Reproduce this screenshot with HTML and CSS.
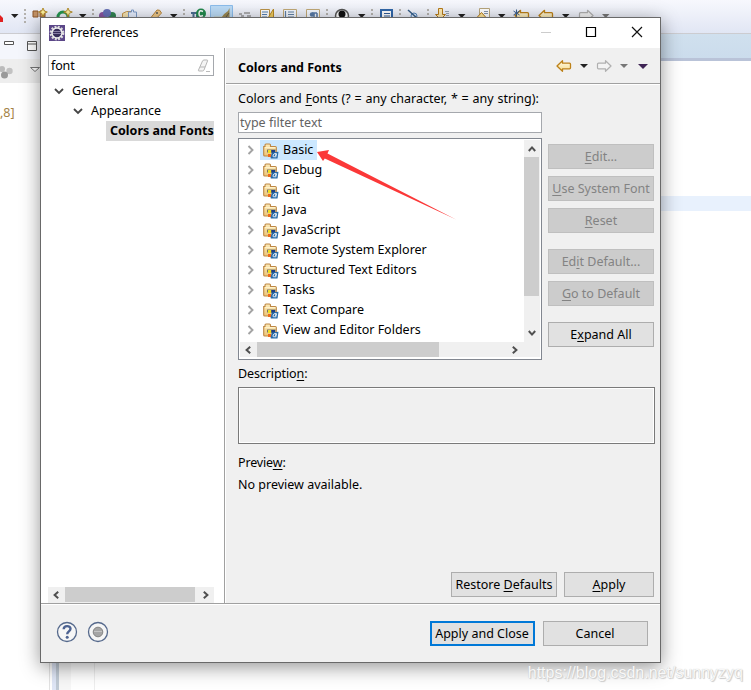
FILE: index.html
```
<!DOCTYPE html>
<html lang="en">
<head>
<meta charset="utf-8">
<title>Preferences</title>
<link rel="stylesheet" href="styles.css">
</head>
<body>
<svg class="defs" width="0" height="0">
  <defs>
    <linearGradient id="gold" x2="0" y2="1"><stop stop-color="#fffbe8"/><stop offset="1" stop-color="#f7dc8c"/></linearGradient>
    <linearGradient id="tan" x2="0" y2="1"><stop stop-color="#fdebb8"/><stop offset="1" stop-color="#edc578"/></linearGradient>
    <symbol id="folder" viewBox="0 0 16 16">
      <path d="M.7 3.500V12a1 1 0 0 0 1 1h10.600a1 1 0 0 0 1-1V4.500a1 1 0 0 0-1-1H7.500V2a1 1 0 0 0-1-1H3a1 1 0 0 0-1 1v1.500z" fill="url(#tan)" stroke="#bd8745" stroke-width="1.100"/>
      <path d="M2 4.700h10.500" stroke="#fff6d4"/>
      <path d="M4 6.500h8.500v3H4z" fill="#77736a"/>
      <path d="M5 7h3v3H5z" fill="#f0e020"/>
      <path d="M8.500 7h3.500v3H8.500z" fill="#1d3d80"/>
      <path d="M5 11h3v3H5z" fill="#ee6a1b"/>
      <path d="M7.500 15l1.300-5.500 6.700-.8-1 6.800H8z" fill="#286ba8"/>
      <path d="M13.300 10.700c-2-.6-3.200.7-3.200 2.200 0 1.600 1.700 1.200 2.500-.3l.7-1.900-.6 3.600" fill="none" stroke="#fff" stroke-width=".9"/>
    </symbol>
    <symbol id="right" viewBox="0 0 8 10"><path d="M1.500 1l4 4-4 4" fill="none" stroke="#a3a3a3" stroke-width="1.900"/></symbol>
    <symbol id="down" viewBox="0 0 10 8"><path d="M1 2l4 4 4-4" fill="none" stroke="#454545" stroke-width="1.800"/></symbol>
    <symbol id="sleft" viewBox="0 0 8 8"><path d="M6.200.8L2.600 4l3.600 3.200" fill="none" stroke="#505050" stroke-width="2"/></symbol>
    <symbol id="sright" viewBox="0 0 8 8"><path d="M1.800.8L5.400 4 1.800 7.200" fill="none" stroke="#505050" stroke-width="2"/></symbol>
    <symbol id="sup" viewBox="0 0 8 8"><path d="M.8 6L4 2.400 7.200 6" fill="none" stroke="#505050" stroke-width="2"/></symbol>
    <symbol id="sdown" viewBox="0 0 8 8"><path d="M.8 2L4 5.600 7.200 2" fill="none" stroke="#505050" stroke-width="2"/></symbol>
    <symbol id="back" viewBox="0 0 16 12"><path d="M1 6l5.500-5.300v2.500h7a1 1 0 0 1 1 1v3.600a1 1 0 0 1-1 1h-7v2.500z" fill="url(#gold)" stroke="#bd8118" stroke-width="1.300" stroke-linejoin="round"/></symbol>
    <symbol id="fwd" viewBox="0 0 16 12"><path d="M15 6L9.500.7v2.500h-7a1 1 0 0 0-1 1v3.600a1 1 0 0 0 1 1h7v2.500z" fill="#f3f3f3" stroke="#b0b0b0" stroke-width="1.200" stroke-linejoin="round"/></symbol>
    <symbol id="caret" viewBox="0 0 8 4"><path d="M0 0h8L4 4z" fill="currentColor"/></symbol>
  </defs>
</svg>
<div class="desktop">
  <div class="toolbar">
    <svg width="751" height="33" viewBox="0 0 751 33">
      <path d="M0 15l3 3v4H0z" fill="#e02020"/>
      <g fill="#222"><path d="M11 14h7.500l-3.800 4zM79 14h7.500l-3.800 4zM170 14h7.500l-3.800 4zM358 14h7.500l-3.800 4zM458 14h7.500l-3.800 4zM498 14h7.500l-3.800 4zM562 14h7.500l-3.800 4z"/><path d="M602 14h7.500l-3.800 4z" fill="#777"/></g>
      <g stroke="#a39f96" stroke-width="1.500" stroke-dasharray="2 2"><path d="M25 9v16M93 9v16M184 9v16M327 9v16M372 9v16M400 9v16M428 9v16"/></g>
      <path d="M33 11h5v6h-5zM40 11h5v6h-5z" fill="#c39265" stroke="#8b5429"/>
      <circle cx="63" cy="17" r="5" fill="none" stroke="#259750" stroke-width="3"/>
      <path d="M43 8l1.300 3 3 1-3 1.300L43 17l-1.300-3.700-3-1.300 3-1zM68 8l1.300 3 3 1-3 1.300L68 17l-1.300-3.700-3-1.300 3-1z" fill="#fff3a0" stroke="#b08720" stroke-width=".9"/>
      <circle cx="103" cy="16" r="4" fill="#8954a1"/><circle cx="112" cy="16" r="4" fill="#318452"/><circle cx="107" cy="13" r="4" fill="#6670b8"/>
      <path d="M122.500 18v-4.500l4-2h5v6" fill="#f8e4b0" stroke="#c3954c"/><path d="M128.500 18v-6h3v-2h2v2h3v6" fill="#e6efff" stroke="#7c9bc8"/>
      <path d="M149 20l8-10q3-1 4.500 3L155 20z" fill="#f0c987" stroke="#b8863f"/><circle cx="157" cy="13" r="1" fill="#555"/>
      <path d="M191 13h10M193.500 13v6M197 15v4" stroke="#4c6e92" stroke-width="2"/><circle cx="201" cy="13.500" r="5" fill="#238a4e"/><path d="M203 11.500q-4-2-4 2t4 2" fill="none" stroke="#fff" stroke-width="1.500"/>
      <path d="M210.500 5.500h22v20h-22z" fill="#bcdcf7" stroke="#8cbdec"/><path d="M221 18q2-4 7-7l1.500-3v10z" fill="#9b8954"/><path d="M226 17l3-4" stroke="#5e5745"/><path d="M214 17.300h9" stroke="#e6bb56"/>
      <path d="M239 14h3m2-1h6m-9 3h3m3 0h4" stroke="#999" stroke-width="1.500"/>
      <path d="M260.500 9.500h9v9h-9z" fill="#fff" stroke="#bc9449"/><path d="M262 12h6M262 14.500h5M262 17h5" stroke="#5482b8"/><path d="M268 18l5.500-9v9" fill="#f0cc60" stroke="#b88923"/>
      <path d="M283.500 9.500h13v10h-13zM306.500 9.500h13v10h-13z" fill="#f5f9ff" stroke="#c3aa78"/><path d="M288 12h6m-6 2.500h6M288 17h6M285.500 11v7" stroke="#6082a8" stroke-width="1.200"/><path d="M317 13h-5M314 13v5m3-5v5" fill="none" stroke="#587ba8" stroke-width="1.500"/><circle cx="312" cy="14.500" r="2.200" fill="#587ba8"/>
      <circle cx="342" cy="16" r="6.500" fill="#fff" stroke="#555" stroke-width="1.500"/><circle cx="342" cy="14" r="3.500" fill="#111"/>
      <path d="M381 10h11v10h-11z" fill="#fff" stroke="#3268ab" stroke-width="2"/><path d="M384 13.500h6m-6 2.500h6" stroke="#315c99"/>
      <circle cx="414" cy="16" r="3" fill="#d9e9ff" stroke="#5585ba"/><path d="M408 10l10 9" stroke="#375e87" stroke-width="1.500"/>
      <path d="M438.500 8.500h4v6h3l-5 5-5-5h3z" fill="#ffeab0" stroke="#b77b19"/><path d="M445 11.500h4m-3 2h3m-3 2h3" stroke="#98a4b5"/>
      <path d="M479.500 8.500h10v9h-10z" fill="#fff" stroke="#b9a77d"/><path d="M484 11.500h4m-4 2h4" stroke="#8697b0"/><path d="M477 17.500l4.500-5 4.500 5z" fill="#ffe69c" stroke="#b77b19"/>
      <use href="#back" x="514" y="9.500" width="16" height="12"/><path d="M516.500 9.500v7m-3-5.500l6 4m0-4l-6 4" stroke="#385e91"/>
      <use href="#back" x="538" y="9.500" width="16" height="12"/><use href="#fwd" x="578" y="9.500" width="16" height="12"/>
    </svg>
  </div>
  <div class="workbench">
    <div class="side">
      <div class="side-tabs"><svg width="40" height="25"><path d="M4.500 7.500h9v3h-9z" fill="#fff" stroke="#555"/><path d="M27.500 7.500h9v9h-9zM27.500 10h9" fill="#fff" stroke="#555"/></svg></div>
      <div class="side-tools"><svg width="40" height="24"><circle cx="2" cy="10" r="3" fill="#bbb"/><circle cx="9.500" cy="12" r="3.200" fill="#c2c2c2"/><circle cx="4.500" cy="16" r="3.500" fill="#999"/><path d="M30.500 8.500h9l-4.500 4z" fill="#fff" stroke="#777"/></svg></div>
      <div class="side-text">,8]</div>
    </div>
    <div class="gutters"></div>
    <div class="editor"><div class="editor-tabs"></div><div class="current-line"></div></div>
  </div>

  <div class="dialog">
    <div class="titlebar">
      <svg width="16" height="16" viewBox="0 0 16 16"><path d="M0 0h16v16H0z" fill="#5b4688"/><circle cx="8" cy="8" r="6.200" fill="none" stroke="#ddd" stroke-width="2.400" stroke-dasharray="1.900 1.350"/><circle cx="8" cy="8" r="5" fill="#362c59" stroke="#eee" stroke-width="1.500"/><path d="M4 6.500h8M4 8.500h8" stroke="#9b91b8" stroke-width=".8"/></svg>
      <span class="title">Preferences</span>
      <svg class="controls" width="112" height="16"><path d="M1 8.500h10" stroke="#ccc"/><path d="M46.500 3.500h9v9h-9z" fill="none" stroke="#000" stroke-width="1.200"/><path d="M92 3l10 10m0-10L92 13" stroke="#111" stroke-width="1.200"/></svg>
    </div>
    <div class="body">
      <div class="nav">
        <div class="search"><span>font</span><svg width="16" height="14"><path d="M3.500 11L7.500 2Q8 1 9 1h3q1 0 .5 1L9 11q-.5 1-1.500 1H4q-1 0-.5-1zM5 8h5" fill="#f4f4f4" stroke="#b5b5b5"/><path d="M11 12.500h4" stroke="#bbb"/></svg></div>
        <div class="nav-row"><svg width="10" height="8"><use href="#down"/></svg><span>General</span></div>
        <div class="nav-row second"><svg width="10" height="8"><use href="#down"/></svg><span>Appearance</span></div>
        <div class="nav-row current"><b>Colors and Fonts</b></div>
        <div class="hbar nav-bar"><svg width="8" height="8"><use href="#sleft"/></svg><i></i><svg width="8" height="8"><use href="#sright"/></svg></div>
      </div>
      <div class="page">
        <div class="page-head">
          <b>Colors and Fonts</b>
          <div class="history">
            <svg width="16" height="12"><use href="#back"/></svg><svg class="c1" width="8" height="4"><use href="#caret"/></svg>
            <svg class="fw" width="16" height="12"><use href="#fwd"/></svg><svg class="c2" width="8" height="4"><use href="#caret"/></svg>
            <svg class="c3" width="10" height="5"><use href="#caret"/></svg>
          </div>
        </div>
        <div class="page-main">
          <div class="label intro">Colors and <u>F</u>onts (? = any character, * = any string):</div>
          <div class="filter">type filter text</div>
          <div class="chooser">
            <div class="tree">
              <div class="tree-top">
                <div class="rows">
                  <div class="row"><svg width="8" height="10"><use href="#right"/></svg><span class="item selected"><svg width="16" height="16"><use href="#folder"/></svg>Basic</span></div>
                  <div class="row"><svg width="8" height="10"><use href="#right"/></svg><span class="item"><svg width="16" height="16"><use href="#folder"/></svg>Debug</span></div>
                  <div class="row"><svg width="8" height="10"><use href="#right"/></svg><span class="item"><svg width="16" height="16"><use href="#folder"/></svg>Git</span></div>
                  <div class="row"><svg width="8" height="10"><use href="#right"/></svg><span class="item"><svg width="16" height="16"><use href="#folder"/></svg>Java</span></div>
                  <div class="row"><svg width="8" height="10"><use href="#right"/></svg><span class="item"><svg width="16" height="16"><use href="#folder"/></svg>JavaScript</span></div>
                  <div class="row"><svg width="8" height="10"><use href="#right"/></svg><span class="item"><svg width="16" height="16"><use href="#folder"/></svg>Remote System Explorer</span></div>
                  <div class="row"><svg width="8" height="10"><use href="#right"/></svg><span class="item"><svg width="16" height="16"><use href="#folder"/></svg>Structured Text Editors</span></div>
                  <div class="row"><svg width="8" height="10"><use href="#right"/></svg><span class="item"><svg width="16" height="16"><use href="#folder"/></svg>Tasks</span></div>
                  <div class="row"><svg width="8" height="10"><use href="#right"/></svg><span class="item"><svg width="16" height="16"><use href="#folder"/></svg>Text Compare</span></div>
                  <div class="row"><svg width="8" height="10"><use href="#right"/></svg><span class="item"><svg width="16" height="16"><use href="#folder"/></svg>View and Editor Folders</span></div>
                </div>
                <div class="vbar"><svg width="8" height="8"><use href="#sup"/></svg><i></i><svg width="8" height="8"><use href="#sdown"/></svg></div>
              </div>
              <div class="hbar tree-bar"><svg width="8" height="8"><use href="#sleft"/></svg><i></i><svg width="8" height="8"><use href="#sright"/></svg></div>
              <svg class="pointer" width="142" height="72" viewBox="0 0 142 72"><path d="M1 3l12-2-1.500 3.500L140 70.500 8.800 9.500 7 12z" fill="#fb3838"/></svg>
            </div>
            <div class="actions">
              <div class="btn off"><span><u>E</u>dit...</span></div>
              <div class="btn off"><span><u>U</u>se System Font</span></div>
              <div class="btn off"><span><u>R</u>eset</span></div>
              <div class="btn off group"><span>Ed<u>i</u>t Default...</span></div>
              <div class="btn off"><span><u>G</u>o to Default</span></div>
              <div class="btn group"><span>E<u>x</u>pand All</span></div>
            </div>
          </div>
          <div class="label desc">Descriptio<u>n</u>:</div>
          <div class="desc-box"></div>
          <div class="label preview">Previe<u>w</u>:</div>
          <div class="label none">No preview available.</div>
          <div class="page-buttons"><div class="btn"><span>Restore <u>D</u>efaults</span></div><div class="btn apply"><span><u>A</u>pply</span></div></div>
        </div>
      </div>
    </div>
    <div class="footer">
      <svg width="22" height="22"><circle cx="11" cy="11" r="9.500" fill="#f6f6f6" stroke="#55698c" stroke-width="1.300"/><path d="M7.700 8.300C7.700 4.200 14.500 4.200 14.500 7.800c0 2.500-3.300 2.700-3.300 5.400" fill="none" stroke="#4c6291" stroke-width="2.400"/><circle cx="11.200" cy="16.200" r="1.500" fill="#4c6291"/></svg>
      <svg width="22" height="22"><circle cx="11" cy="11" r="9.500" fill="#f6f6f6" stroke="#55698c" stroke-width="1.300"/><circle cx="11" cy="11" r="4.800" fill="#a5a5a5" stroke="#858585"/><path d="M7 10.500h8" stroke="#c4c4c4"/></svg>
      <div class="btn default"><span>Apply and Close</span></div>
      <div class="btn cancel"><span>Cancel</span></div>
    </div>
  </div>
  <div class="watermark">https://blog.csdn.net/sunnyzyq</div>
</div>
</body>
</html>
```
FILE: styles.css
```
* { box-sizing: border-box; }
body { margin: 0; overflow: hidden; font: 12.5px/20px "Noto Sans", "Open Sans", sans-serif; color: #000; }
svg { display: block; flex: none; }
u { text-decoration: underline; text-underline-offset: 2px; text-decoration-thickness: 1px; text-decoration-skip-ink: none; }
.defs { position: absolute; }
.desktop { position: relative; width: 751px; height: 690px; background: #fff; display: flex; flex-direction: column; overflow: hidden; }
.toolbar { height: 34px; background: linear-gradient(#f7f8fd, #e1e6f4); border-bottom: 1px solid #ccccd0; flex: none; }
.workbench { display: flex; flex: 1; }
.side { width: 49px; }
.side-tabs { height: 25px; background: #f4f6fc; }
.side-tools { height: 24px; background: #eee; }
.side-text { margin-top: 20px; color: #a58346; }
.gutters { width: 46px; border-left: 1px solid #e2e2e2; border-right: 1px solid #eee; background: linear-gradient(90deg, #fff 0 2px, #dfe6f6 2px 6px, #c0cad5 6px 9px, #f7f7f7 9px 21px, #fff 21px); }
.editor { flex: 1; }
.editor-tabs { height: 27px; background: linear-gradient(#d0e0ee, #cbdcec); border-bottom: 3px solid #b9c3d8; }
.current-line { margin-top: 135px; height: 15px; background: #e8f1fd; }

.dialog { position: absolute; left: 40px; top: 17px; width: 621px; height: 646px; border: 1px solid #696969; background: #f0f0f0; box-shadow: 0 4px 18px rgba(0,0,0,.42); display: flex; flex-direction: column; }
.titlebar { height: 30px; background: #fff; display: flex; align-items: center; padding: 0 8px; flex: none; }
.title { margin-left: 5px; letter-spacing: -.12px; }
.controls { margin: -2px 0 0 auto; }
.body { height: 555px; display: flex; }
.nav { width: 184px; background: #fff; border-right: 1px solid #a0a0a0; padding: 7px 10px 0 7px; display: flex; flex-direction: column; }
.search { height: 21px; border: 1px solid #a5a8ad; display: flex; align-items: center; justify-content: space-between; padding: 0 2px; margin-bottom: 5px; letter-spacing: -.15px; }
.nav-row { height: 20px; display: flex; align-items: center; padding-left: 6px; gap: 8px; white-space: nowrap; }
.nav-row.second { padding-left: 25px; }
.nav-row.current { margin-left: 58px; padding-left: 4px; background: #d9d9d9; }
.hbar { display: flex; align-items: center; background: #f0f0f0; flex: none; }
.hbar i { background: #cdcdcd; height: 15px; align-self: flex-start; }
.nav-bar { margin-top: auto; height: 16px; }
.nav-bar svg { margin: 0 5px 0 4px; }
.nav-bar i { width: 130px; }
.nav-bar svg:last-child { margin: 0 0 0 7px; }
.page { flex: 1; display: flex; flex-direction: column; border-left: 1px solid #fff; }
.page-head { height: 37px; border-bottom: 1px solid #fff; box-shadow: inset 0 -1px #a0a0a0; padding: 3px 12px 0 12px; display: flex; align-items: center; justify-content: space-between; }
.history { display: flex; align-items: center; color: #222; margin-bottom: 3px; }
.c1 { margin: 0 8px; }
.fw { margin-right: 8px; }
.c2 { color: #777; margin-right: 10px; }
.c3 { color: #3f2455; }
.page-main { padding: 4px 5px 0 12px; flex: 1; display: flex; flex-direction: column; }
.label { height: 20px; white-space: nowrap; }
.intro { word-spacing: .55px; }
.filter { width: 304px; height: 21px; margin-top: 3px; background: #fff; border: 1px solid #a5a8ad; color: #636363; padding-left: 1px; line-height: 19px; }
.chooser { display: flex; gap: 6px; margin-top: 5px; }
.tree { position: relative; width: 304px; height: 222px; background: #fff; border: 1px solid #828790; padding: 1px; }
.tree-top { height: 202px; display: flex; }
.rows { flex: 1; overflow: hidden; }
.row { display: flex; align-items: center; height: 20px; padding-left: 7px; gap: 5px; }
.item { display: flex; align-items: center; gap: 4px; height: 20px; padding: 0 4px 0 3px; white-space: nowrap; }
.item svg { margin-top: 1px; }
.selected { background: #cce8ff; }
.vbar { width: 16px; background: #f0f0f0; display: flex; flex-direction: column; align-items: center; padding: 5px 1px 5px 0; }
.vbar i { width: 15px; height: 139px; background: #cdcdcd; margin: 4px 0 auto; align-self: flex-start; }
.tree-bar { height: 15px; }
.tree-bar svg { margin: 0 5px 0 4px; }
.tree-bar i { width: 182px; }
.tree-bar svg:last-child { margin: 0 0 0 72px; }
.pointer { position: absolute; left: 77px; top: 10px; }
.actions { width: 106px; padding-top: 6px; display: flex; flex-direction: column; gap: 7px; }
.btn { height: 25px; border: 1px solid #adadad; background: #e1e1e1; display: flex; align-items: center; justify-content: center; white-space: nowrap; flex: none; }
.off { color: #838383; background: #ccc; border-color: #bfbfbf; }
.group { margin-top: 9px; }
.desc { margin-top: 4px; letter-spacing: -.1px; }
.desc-box { height: 57px; margin-top: 3px; border: 1px solid #7a7a7a; box-shadow: inset 0 0 0 1px #fff; }
.preview { margin-top: 9px; letter-spacing: -.15px; }
.none { margin-top: 2px; }
.page-buttons { display: flex; justify-content: flex-end; gap: 7px; margin: 77px 1px 0 0; }
.page-buttons .btn { width: 106px; }
.page-buttons .apply { width: 90px; }
.footer { flex: 1; border-top: 1px solid #a0a0a0; box-shadow: inset 0 1px #fff; display: flex; align-items: center; padding: 0 12px 0 15px; gap: 9px; }
.footer svg { margin-top: -2px; }
.footer .btn { margin-top: 1px; }
.footer .default { width: 105px; margin-left: auto; margin-right: -1px; border: 2px solid #0078d7; }
.cancel { width: 105px; }
.cancel span, .default span { margin-right: 1px; }
.watermark { position: absolute; right: 8px; bottom: 6px; font: 16px/22px "Liberation Sans", sans-serif; color: #f8f8f8; text-shadow: 0 0 1px #bbb, 1px 1px 1px #ccc; }
```
